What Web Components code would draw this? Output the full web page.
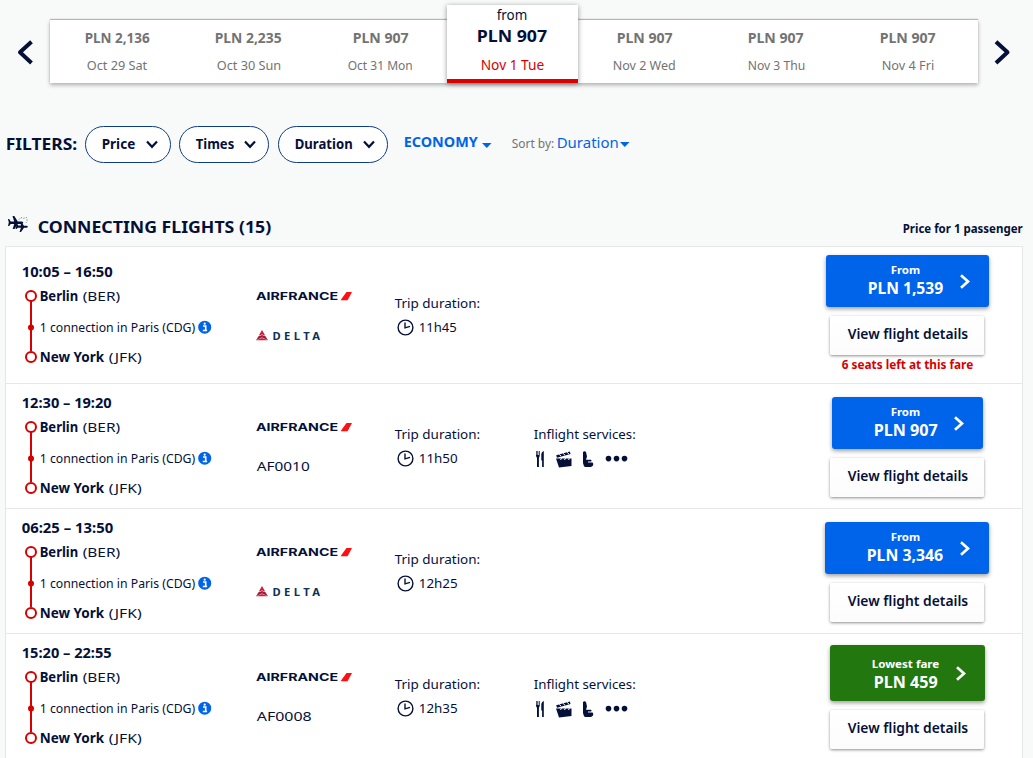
<!DOCTYPE html>
<html lang="en">
<head>
<meta charset="utf-8">
<title>Flights Berlin – New York</title>
<style>
html,body{margin:0;height:758px;overflow:hidden;background:#f8faf9}
body{font-family:"Noto Sans","Open Sans",sans-serif;color:#051039}
</style>
</head>
<body>
<flight-page></flight-page>
<script>
const define = (name, html, setup) => {
  const tpl = document.createElement('template');
  tpl.innerHTML = html;
  customElements.define(name, class extends HTMLElement {
    connectedCallback() {
      if (this.shadowRoot) return;
      this.attachShadow({mode:'open'}).append(tpl.content.cloneNode(true));
      if (setup) setup(this, this.shadowRoot);
    }
  });
};

// One line of text, its letters widened (or narrowed) to a given width.
define('fitted-text', `<style>
:host{display:block;white-space:nowrap;flex:none;line-height:20px}
span{display:inline-block;transform-origin:0 50%}
</style><span><slot></slot></span>`, (el, root) => {
  const size = el.getAttribute('size'), w = +el.getAttribute('w');
  el.style.fontSize = size + 'px';
  el.style.width = w + 'px';
  if (el.hasAttribute('weight')) el.style.fontWeight = el.getAttribute('weight');
  if (el.hasAttribute('color')) el.style.color = el.getAttribute('color');
  const span = root.querySelector('span');
  const natural = span.getBoundingClientRect().width;
  span.style.transform = `translateX(-.3px) scaleX(${(w + .5) / natural})`;
});
const t = (text, w, size, weight = 400, color = '') =>
  `<fitted-text w="${w}" size="${size}" weight="${weight}"${color ? ` color="${color}"` : ''}>${text}</fitted-text>`;

define('date-cell', `<style>
:host{flex:0 0 131.800px;display:flex;flex-direction:column;align-items:center;box-sizing:border-box;height:63px;color:#737373;padding-top:8px;gap:7px;padding-left:2px}
:host([selected]){flex:0 0 131px;height:78px;margin:-15px 0 0 1.600px;background:#fff;color:#051039;border-bottom:4px solid #d90000;box-shadow:0 1px 5px rgba(0,0,0,.42);padding:0;gap:0;position:relative}
:host([selected]) ::slotted(.price){margin:1px 0 9px}
</style><slot></slot>`);

define('date-strip', `<style>
:host{display:grid;grid-template-columns:50px 928px 55px;padding-top:20px;height:63px}
.strip{display:flex;background:#fff;height:63px;box-shadow:0 2px 4px rgba(0,0,0,.3),0 -1px 1px rgba(90,70,80,.35)}
svg{display:block;fill:none;stroke:#051039;stroke-width:4;stroke-linejoin:round}
.l{margin:20px 0 0 16px}.r{margin:20px 0 0 15px}
</style>
<svg class="l" width="18" height="25"><path d="M15.5 1.7 4 12.3 15.5 23"/></svg>
<div class="strip">
${[['PLN 2,136',64.5,'Oct 29 Sat',60],['PLN 2,235',66.5,'Oct 30 Sun',64],['PLN 907',55.5,'Oct 31 Mon',64.5]].map(d=>`<date-cell>${t(d[0],d[1],14,700)}${t(d[2],d[3],11.8)}</date-cell>`).join('')}
<date-cell selected>${t('from',30,13.5)}${t('PLN 907',70,16.5,700).replace('<fitted-text','<fitted-text class="price"')}${t('Nov 1 Tue',63,13.5,400,'#d90000')}</date-cell>
${[['Nov 2 Wed',62.5],['Nov 3 Thu',57],['Nov 4 Fri',52]].map(d=>`<date-cell style="padding-left:1px">${t('PLN 907',55.5,14,700)}${t(d[0],d[1],11.8)}</date-cell>`).join('')}
</div>
<svg class="r" width="19" height="25"><path d="M3 1.7 14.5 12.3 3 23"/></svg>`);

define('filter-pill', `<style>
:host{display:flex;box-sizing:border-box;height:37px;border:1px solid #0d3b8c;border-radius:19px;background:#fff;align-items:center;justify-content:space-between;padding:0 12px 0 16px}
::slotted(*){margin-top:-1px}
svg{fill:none;stroke:#051039;stroke-width:2.200}
</style><slot></slot><svg width="12" height="9"><path d="M1 1.500 6 6.800 11 1.500"/></svg>`);

define('filter-bar', `<style>
:host{display:flex;height:37px;margin-top:43px;padding-left:6px;align-items:center}
svg{fill:#0064eb;display:block}
.caret{margin-top:2px}
</style>
<div style="margin-top:-2px">${t('FILTERS:',71,16.5,700)}</div>
<filter-pill style="width:86px;margin-left:8px">${t('Price',33,13.5,700)}</filter-pill>
<filter-pill style="width:90px;margin-left:8px">${t('Times',38,13.5,700)}</filter-pill>
<filter-pill style="width:110px;margin-left:9px">${t('Duration',57.5,13.5,700)}</filter-pill>
<div style="margin:-5px 0 0 16px">${t('ECONOMY',73.5,13.500,700,'#0064eb')}</div>
<svg class="caret" style="margin-left:4.500px" width="10" height="5"><path d="M0 0h9.500L4.800 5z"/></svg>
<div style="margin:-1px 0 0 19.500px">${t('Sort by:',42,12,400,'#737373')}</div>
<div style="margin:-6px 0 0 3px">${t('Duration',61.500,14.5,400,'#0064eb')}</div>
<svg class="caret" style="margin:0 0 0 1.500px" width="10" height="5"><path d="M0 0h9.500L4.800 5z"/></svg>`);

define('list-heading', `<style>
:host{display:flex;height:83px;box-sizing:border-box;padding:53px 11px 0 7px;align-items:flex-start}
svg{margin:0 8.500px 0 0}
.title{margin-top:1px}
.price{margin:1.500px 0 0 auto}
</style>
<svg width="22" height="17" fill="#051039"><path d="M1 3l1.200 0 1.500 2.500h3.500L5.500 0h1.800l3.500 5.500h4q1.500.2 1.500 1.200t-1.500 1.200h-4L7.500 13H5.700l1.500-5H3.700l-1.500 2H1l.8-3.400z"/><path d="M9 8h1l1.200 1.600h2.800l-.6-3h1.300l2.300 3.200h2.500q1.500.3 1.500 1t-1.500 1H17l-3 4.200h-1.400l1.300-4.200h-3L9.500 13h-1l.7-2.500z"/><path d="M12 3.500 14 1.400l2 1 3.500-1 .8 4-2 2" fill="none" stroke="#6f7588" stroke-width=".8" stroke-dasharray="1.500 1.200"/></svg>
<div class="title">${t('CONNECTING FLIGHTS (15)',233,16.2,700)}</div>
<div class="price">${t('Price for 1 passenger',119.5,11.8,700)}</div>`);

define('flight-route', `<style>
:host{display:block;width:234px}
.body{display:flex;margin-left:3px}
svg{display:block;flex:none}
.time{height:20px;margin-top:9px}
.line{display:flex;gap:5px;height:20px;align-items:center}
.stops{margin:4px 0 0 3px}
</style>
<div class="time"><slot></slot></div>
<div class="body">
<svg style="margin-top:7px" width="12" height="75"><g fill="none" stroke="#d60000" stroke-width="2"><path d="M6 12v50"/><circle cx="6" cy="7" r="5"/><circle cx="6" cy="68" r="5"/></g><circle cx="6" cy="38.500" r="3" fill="#d60000"/></svg>
<div class="stops">
<div class="line">${t('Berlin',38,13.5,700)}${t('(BER)',37,13.2)}</div>
<div class="line" style="margin-top:11px;gap:3px">${t('1 connection in Paris (CDG)',155,11.8)}<svg width="14" height="14"><circle cx="6.700" cy="7.200" r="6.500" fill="#0064eb"/><path d="M5 6h2.700v4.100M4.800 10.500h4.300" fill="none" stroke="#fff" stroke-width="1.600"/><circle cx="6.700" cy="3.700" r="1.100" fill="#fff"/></svg></div>
<div class="line" style="margin-top:10px">${t('New York',64,13.5,700)}${t('(JFK)',32.500,13.2)}</div>
</div></div>`);

define('airfrance-logo', `<style>:host{display:block;height:10px}svg{display:block;margin-top:-4px}text{font:700 10.800px Inter,"Noto Sans",sans-serif;fill:#051039}</style>
<svg width="104" height="18"><text x="0" y="13" textLength="82" lengthAdjust="spacingAndGlyphs">AIRFRANCE</text><path d="M84.500 13.200 90.500 5H96l-4.500 8.200z" fill="#ff0e12"/></svg>`);

define('delta-logo', `<style>:host{display:block;height:12px}svg{display:block;margin-top:-4px}text{font:700 11.200px "Noto Sans",sans-serif;letter-spacing:3.400px;fill:#0c3057}</style>
<svg width="84" height="20"><path d="M6 4 9.200 9.600 6 8.500 2.800 9.600z" fill="#c8203c"/><path d="M2.500 10.200 6 9.100l3.500 1.100 2.500 4L6 11.600 0 14.200z" fill="#a51c36"/><path d="M0 14.300 6 12l6 2.300z" fill="#bd2541"/><text x="16.500" y="13.800">DELTA</text></svg>`);

define('inflight-services', `<style>:host{display:block}svg{display:block;margin-top:7px}</style>
${t('Inflight services:',101.500,13.2)}
<svg width="96" height="17" fill="#051039"><path d="M2 0h.7v4h.7V0h.8v4h.7V0h.8v5L4.900 7v9H3V7L2 5z"/><path d="M9.800.0v16H8.100V9.500H7.300V3Q7.800.4 9.800 0z"/>
<path d="M22 7.500h15.500V15L25 16.500z"/><path d="M22.200 4.200 35.800.600l.8 2.300L23 6.700z"/><path d="M25.200 3.400l2 1.800M29 2.400l2 1.800M33 1.300l2 1.800M26.500 9l1-1.800M30.500 9l1-1.800M34.500 9l1-1.800" stroke="#fff" stroke-width="1"/>
<path d="M49 1q1.500-1.500 3 0l1 4.500-1 3.300h5q1 1.200 0 1.700h-3v1h4.500q1.500 1.500 0 3.500l-1.500 1h-6q-1.500-1-2-4z"/>
<circle cx="74.500" cy="7.600" r="2.800"/><circle cx="82.500" cy="7.600" r="2.800"/><circle cx="90.500" cy="7.600" r="2.800"/></svg>`);

define('trip-duration', `<style>
:host{display:block;width:139.500px;margin-left:.5px}
.line{display:flex;align-items:center;gap:5px;height:20px;margin:4px 0 0 2.500px}
svg{display:block;fill:none;stroke:#051039;stroke-width:1.400}
</style>${t('Trip duration:',85,13.2)}
<div class="line"><svg width="17" height="17"><circle cx="8.500" cy="8.500" r="7.400"/><path d="M8 3.500v5.300l5-1.500"/></svg><slot></slot></div>`);

define('fare-button', `<style>
:host{display:flex;align-items:center;justify-content:space-between;box-sizing:border-box;height:52px;border-radius:3px;background:#0064eb;color:#fff;padding:0 19px 0 42px;box-shadow:0 2px 4px rgba(0,0,0,.38)}
:host([lowest]){background:#22780f;height:56px}
.label{display:flex;flex-direction:column;align-items:center;height:38px;margin-top:-4px}
:host([lowest]) .label{margin-top:0}
.label ::slotted(*){line-height:19px}
svg{display:block;fill:none;stroke:#fff;stroke-width:2.700}
</style><div class="label"><slot></slot></div><svg width="10" height="15"><path d="M1 1.200 8 7.500 1 13.800"/></svg>`);

define('details-button', `<style>
:host{display:flex;align-items:center;justify-content:center;box-sizing:border-box;width:154px;height:39px;background:linear-gradient(#fff,#fcfcfc);box-shadow:0 1px 3px rgba(0,0,0,.45);border-radius:2px;margin:9px 1px 0 0;padding:0 0 3px 1px}
</style>${t('View flight details',120,13.5,600)}`);

define('flight-row', `<style>
:host{display:flex;box-sizing:border-box;height:125px;border-bottom:1px solid #e7e7e7;padding-left:16px}
:host([tall]){height:137px}
.info{display:flex;flex:1}
:host([tall]) .info{padding-top:6px}
.carrier{width:138px;padding-top:38px}
.flight{height:20px;margin:28px 0 0 1px}
.col{padding-top:40px}
.fare{width:229px;display:flex;flex-direction:column;align-items:center}
</style><div class="info"><flight-route></flight-route><div class="carrier"><airfrance-logo></airfrance-logo><div class="flight"></div></div><div class="col trip"></div><div class="col services"></div></div><div class="fare"></div>`, (el, root) => {
  const f = flights[+el.getAttribute('index')], q = s => root.querySelector(s);
  q('flight-route').innerHTML = t(f.time, f.tw, 13.5, 700);
  q('.flight').innerHTML = f.no ? t(f.no, f.nw, 13.2) : '<delta-logo style="margin:33px 0 0 -1px"></delta-logo>';
  q('.trip').innerHTML = `<trip-duration>${t(f.dur, f.dw, 13.2)}</trip-duration>`;
  if (f.no) q('.services').innerHTML = '<inflight-services></inflight-services>';
  q('.fare').style.paddingTop = f.top + 'px';
  q('.fare').innerHTML = `<fare-button ${f.low ? 'lowest' : ''} style="width:${f.bw}px${f.bw === 164 ? ';margin-right:1px' : ''}">${t(f.low ? 'Lowest fare' : 'From', f.low ? 67 : 29, 11.3, 700)}${t(f.price, f.pw, 15.7, 700)}</fare-button><details-button></details-button>${f.seats ? t('6 seats left at this fare', 131, 11.6, 700, '#d60000') : ''}`;
});

const flights = [
  {time:'10:05 – 16:50', tw:90.5, dur:'11h45', dw:37.5, price:'PLN 1,539', pw:75, bw:163, top:8, seats:true},
  {time:'12:30 – 19:20', tw:89.5, dur:'11h50', dw:38.5, price:'PLN 907', pw:63.5, bw:151, top:13, no:'AF0010', nw:52.5},
  {time:'06:25 – 13:50', tw:91, dur:'12h25', dw:38.5, price:'PLN 3,346', pw:76, bw:164, top:13},
  {time:'15:20 – 22:55', tw:89.5, dur:'12h35', dw:38.5, price:'PLN 459', pw:63.5, bw:155, top:11, no:'AF0008', nw:54.5, low:true}
];

define('flight-list', `<style>
:host{display:block;box-sizing:border-box;width:1018px;margin-left:5px;height:530px;background:#fff;border:1px solid #e5e6e6}
</style><flight-row index="0" tall></flight-row><flight-row index="1"></flight-row><flight-row index="2"></flight-row><flight-row index="3"></flight-row>`);

define('flight-page', `<style>:host{display:block;width:1033px;height:758px;overflow:hidden;background:#f8faf9}</style>
<date-strip></date-strip><filter-bar></filter-bar><list-heading></list-heading><flight-list></flight-list>`);
</script>
</body>
</html>
